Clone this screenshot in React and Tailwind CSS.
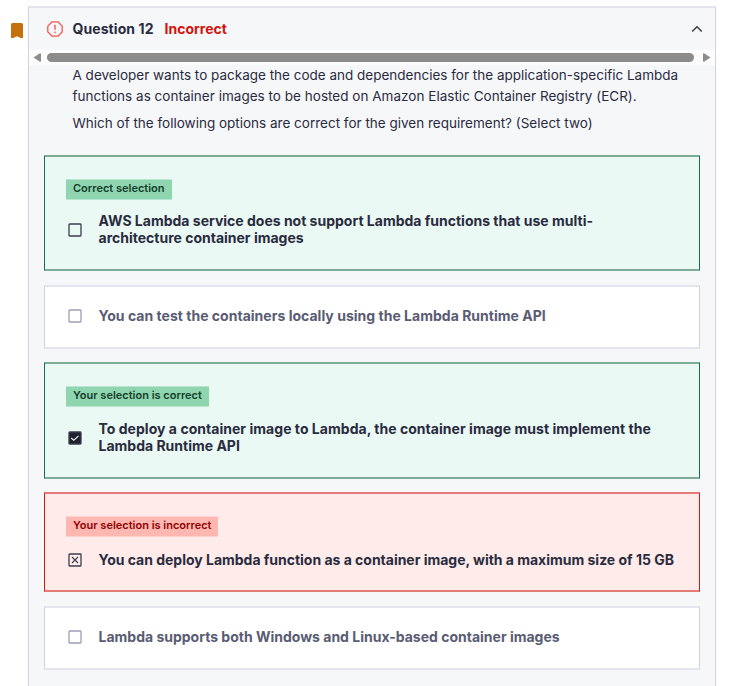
const tones = {
  correct: {
    card: "border-x-[#1f6b48] border-y-[#7eab95] bg-[#eaf9f4]",
    badge: "bg-[#8ed5b0] border-y-[#b8e6d0] text-[#153d2b]",
    text: "text-[#2a2b3f]",
  },
  incorrect: {
    card: "border-x-[#d2190f] border-y-[#e57b76] bg-[#ffecea]",
    badge: "bg-[#ffb7b2] border-y-[#ffd0cc] text-[#8f0000]",
    text: "text-[#2a2b3f]",
  },
  neutral: {
    card: "border-x-[#d1d2e0] border-y-[#e4e5ee] bg-white",
    badge: "",
    text: "text-[#595c73]",
  },
};

const options = [
  {
    tone: "correct",
    box: "empty",
    badge: "Correct selection",
    badgeSize: "w-[106px] pt-0",
    size: "h-[116px]",
    row: "mt-[13px]",
    lines: [
      ["AWS Lambda service does not support Lambda functions that use multi-", ""],
      ["architecture container images", ""],
    ],
  },
  {
    tone: "neutral",
    box: "muted",
    size: "h-16 mt-3.5",
    row: "mt-[21px]",
    lines: [["You can test the containers locally using the Lambda Runtime API", "tracking-[0.02px]"]],
  },
  {
    tone: "correct",
    box: "checked",
    badge: "Your selection is correct",
    badgeSize: "w-[143px] pt-px",
    size: "h-[117px] mt-[13px]",
    row: "mt-[14px]",
    lines: [
      ["To deploy a container image to Lambda, the container image must implement the", "tracking-[0.035px]"],
      ["Lambda Runtime API", ""],
    ],
  },
  {
    tone: "incorrect",
    box: "crossed",
    badge: "Your selection is incorrect",
    badgeSize: "w-[152px] pt-px",
    size: "h-[100px] mt-[13px]",
    row: "mt-[15px]",
    lines: [["You can deploy Lambda function as a container image, with a maximum size of 15 GB", "tracking-[-0.015px]"]],
  },
  {
    tone: "neutral",
    box: "muted",
    size: "h-16 mt-3.5",
    row: "mt-[21px]",
    lines: [["Lambda supports both Windows and Linux-based container images", ""]],
  },
];

function Box({ kind }) {
  const stroke = kind === "muted" ? "#9c9db8" : "#3b3c4c";
  return (
    <svg width="14" height="14" viewBox="0 0 14 14" fill="none" className="shrink-0">
      <rect
        x="1"
        y="1"
        width="12"
        height="12"
        rx="0.7"
        stroke={stroke}
        strokeWidth="1.3"
        fill={kind === "checked" ? "#20212f" : "none"}
      />
      {kind === "checked" && <path d="M3.2 7 5.8 9.2l4.8-4.4" stroke="#e6f3ef" strokeWidth="1.1" />}
      {kind === "crossed" && <path d="m4 4 6 6M10 4l-6 6" stroke="#3b3c4c" strokeWidth="1.1" />}
    </svg>
  );
}

function Option({ option }) {
  const tone = tones[option.tone];
  return (
    <div className={`flex flex-col border-x border-y-2 pl-[21px] ${tone.card} ${option.size}`}>
      {option.badge && (
        <div
          className={`mt-[22px] flex h-[21px] items-center whitespace-nowrap border-y pl-[7px] text-[11px] font-semibold ${tone.badge} ${option.badgeSize}`}
        >
          <span className="-mt-[3px]">{option.badge}</span>
        </div>
      )}
      <div className={`flex items-center pl-0.5 ${option.row}`}>
        <Box kind={option.box} />
        <div className={`-mt-px ml-[16.5px] whitespace-nowrap text-[14px] font-bold leading-[17px] ${tone.text}`}>
          {option.lines.map(([text, tracking]) => (
            <div key={text}>
              <span className={tracking}>{text}</span>
            </div>
          ))}
        </div>
      </div>
    </div>
  );
}

export default function App() {
  return (
    <div className="flex h-[686px] w-[736px] overflow-hidden bg-white font-['Inter',sans-serif] text-[#2a2b3f]">
      <svg width="12" height="15" viewBox="0 0 12 15" className="ml-[11px] mt-[23px] shrink-0">
        <path d="M0 1.5Q0 0 1.5 0h9Q12 0 12 1.5V15H9.8L6 13.2 2.2 15H0Z" fill="#c4710d" />
      </svg>
      <div className="ml-[5px] mt-1.5 flex w-[688px] flex-col border-x border-t-2 border-x-[#d1d2e0] border-t-[#e2e3ec] bg-[#f6f7f9]">
        <div className="flex h-[42px] items-center pb-px">
          <svg width="16" height="16" viewBox="0 0 16 16" fill="none" stroke="#f4554d" className="ml-[18px]">
            <path d="M5.1.8h5.8l4.3 4.3v5.8l-4.3 4.3H5.1L.8 10.9V5.1Z" strokeWidth="1.3" strokeLinejoin="round" />
            <path d="M8 3.8v5" strokeWidth="1.4" />
            <path d="M8 10.5v1.5" strokeWidth="1.4" />
          </svg>
          <span className="-mt-px ml-[9.5px] w-[92px] whitespace-nowrap text-[14px] font-bold tracking-[0.08px]">
            Question 12
          </span>
          <span className="-mt-px whitespace-nowrap text-[14px] font-bold text-[#d2140c]">Incorrect</span>
          <svg width="12" height="8" viewBox="0 0 12 8" fill="none" className="ml-auto mr-[12px]">
            <path d="M1.2 6.5 6 1.7l4.8 4.8" stroke="#3b3c4c" strokeWidth="1.5" />
          </svg>
        </div>
        <div className="flex h-[15px] items-center bg-[#fcfcfc] px-1">
          <svg width="8" height="9" viewBox="0 0 8 9" fill="#8b8b8b">
            <path d="M.5 4.5 7 .2q1-.2 1 .8v7q0 1-1 .8Z" />
          </svg>
          <div className="ml-1.5 h-[9px] w-[647px] rounded-full bg-[#8b8b8b]" />
          <svg width="8" height="9" viewBox="0 0 8 9" fill="#8b8b8b" className="ml-[9px]">
            <path d="M7.5 4.5 1 .2Q0 0 0 1v7q0 1 1 .8Z" />
          </svg>
        </div>
        <div className="whitespace-nowrap pl-[43.5px] text-[13.5px] leading-[21px]">
          <div>A developer wants to package the code and dependencies for the application-specific Lambda</div>
          <div className="tracking-[0.02px]">
            functions as container images to be hosted on Amazon Elastic Container Registry (ECR).
          </div>
          <div className="mt-1.5">
            Which of the following options are correct for the given requirement? (Select two)
          </div>
        </div>
        <div className="mx-[15px] mt-[21px]">
          {options.map((option) => (
            <Option key={option.lines[0][0]} option={option} />
          ))}
        </div>
      </div>
    </div>
  );
}
